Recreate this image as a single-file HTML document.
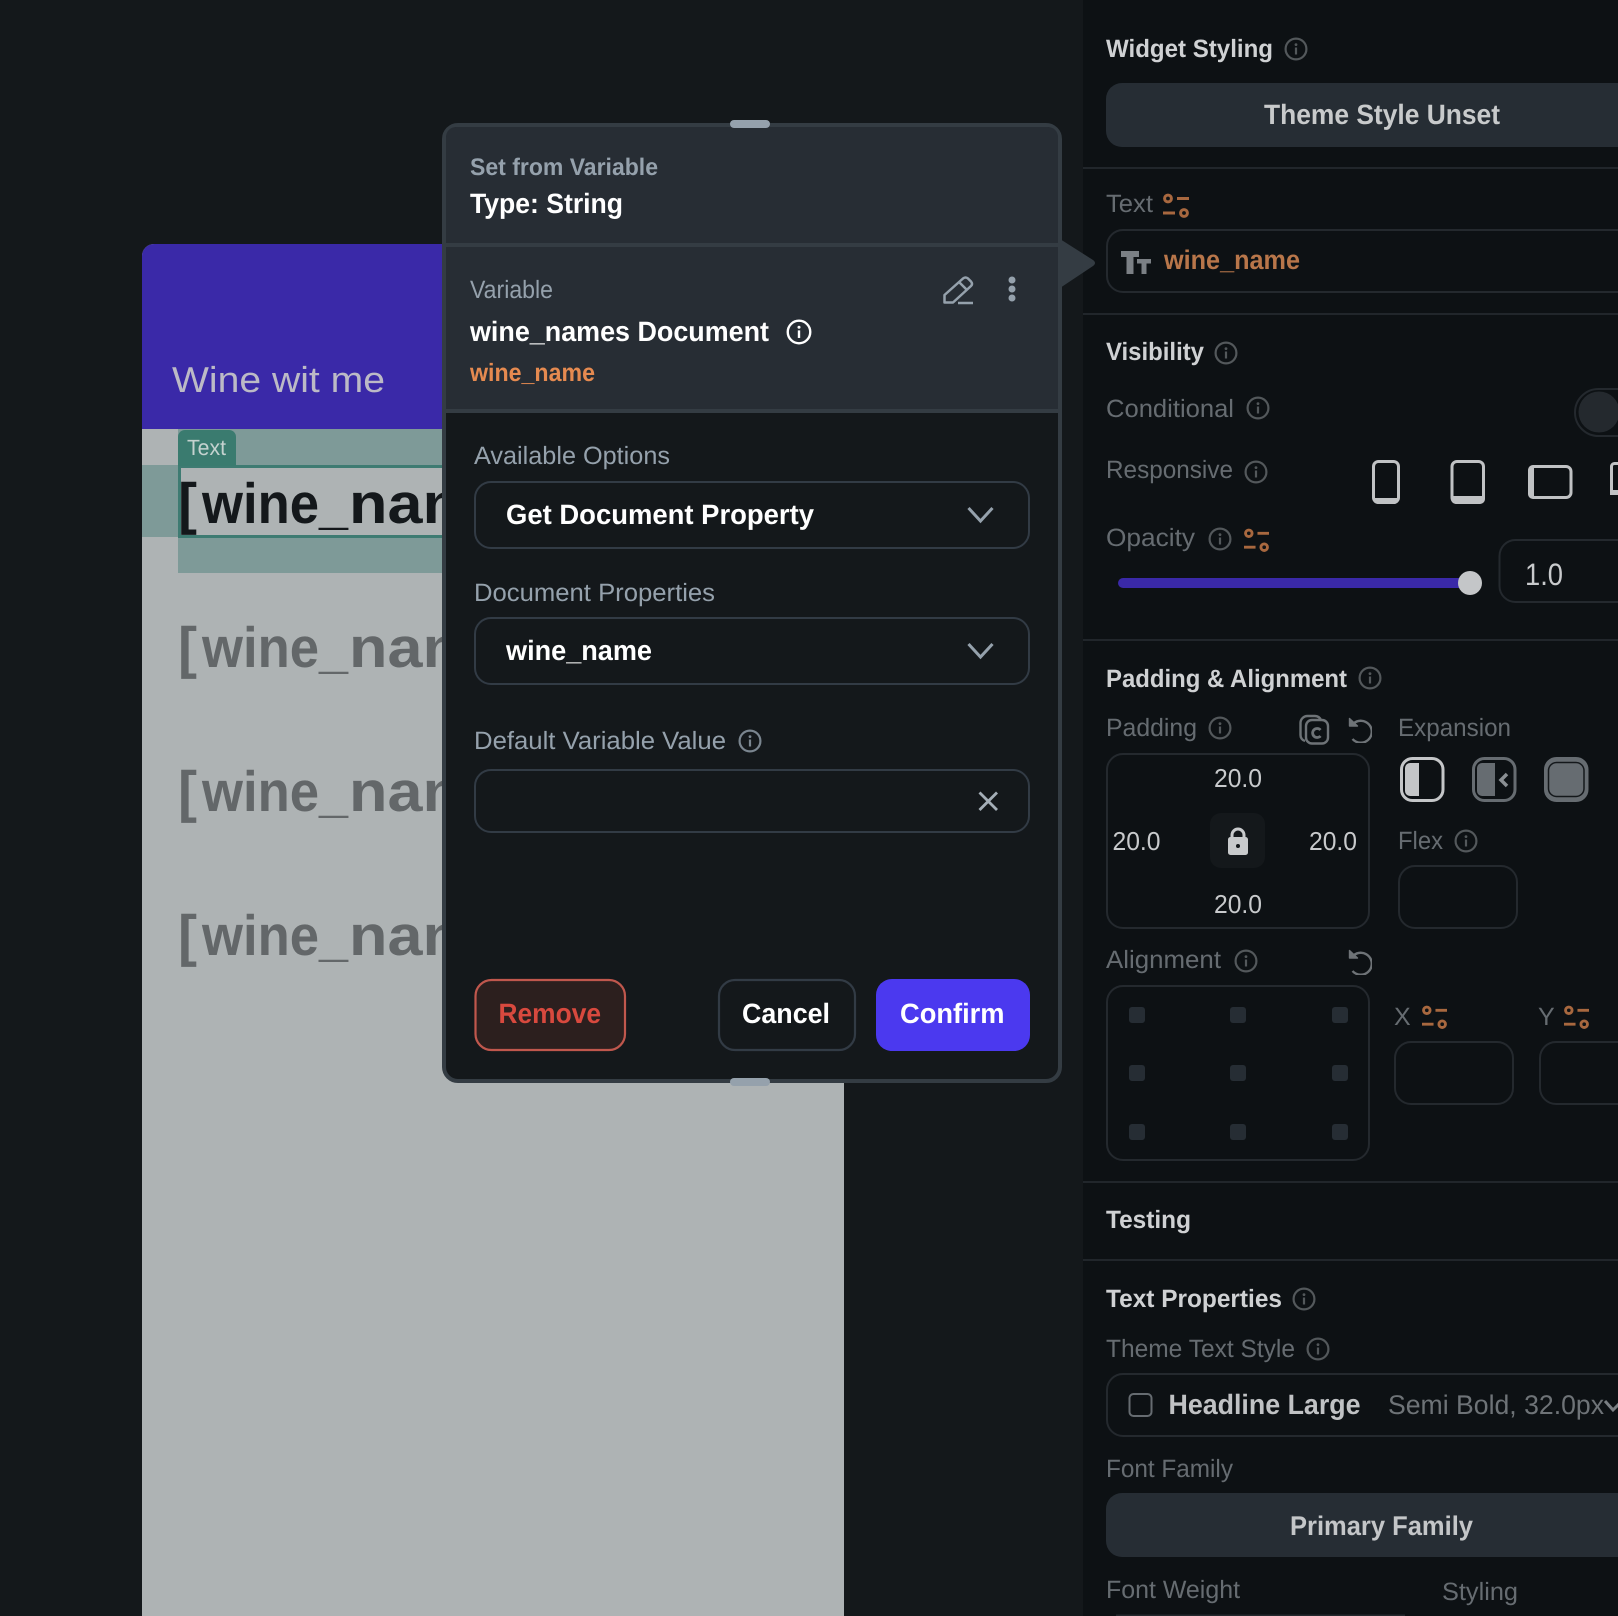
<!DOCTYPE html>
<html lang="en"><head><meta charset="utf-8"><title>Set from Variable</title>
<style>
html,body{margin:0;padding:0;background:#14181b;width:1618px;height:1616px;overflow:hidden}
svg{display:block;position:absolute;left:0;top:0}
text{font-family:"Liberation Sans",sans-serif;text-rendering:geometricPrecision;white-space:pre}
.l{font-size:25px;fill:#666c71}
.h{font-size:25px;font-weight:bold;fill:#cfd1d3}
.m{font-size:25px;fill:#95a1ac}
.b{font-size:28px;font-weight:bold;fill:#fff}
.n{font-size:26px;fill:#c8cacc}
.big{font-size:57px;font-weight:bold;fill:#636769}
.dk{fill:#14181b}
</style></head><body>
<svg width="1618" height="1616" viewBox="0 0 1618 1616" xmlns="http://www.w3.org/2000/svg">
<defs>
<symbol id="i" viewBox="0 0 24 24"><circle cx="12" cy="12" r="10.4" fill="none" stroke="currentColor" stroke-width="2.2"/><rect x="10.9" y="10.5" width="2.2" height="7" fill="currentColor"/><circle cx="12" cy="7.6" r="1.4" fill="currentColor"/></symbol>
<symbol id="v" viewBox="0 0 28 26"><g fill="none" stroke="#a8683f" stroke-width="3"><circle cx="6" cy="5.500" r="3.400"/><circle cx="22" cy="20" r="3.400"/><path d="M15 5.500H27M1 20H13"/></g></symbol>
<symbol id="u" viewBox="0 0 24 26"><path d="M5.500 6.500A11 11 0 1 1 4.500 22" fill="none" stroke="#6e7377" stroke-width="2.400"/><path d="M1.500 1.500V9H9.500Z" fill="#6e7377" stroke="#6e7377" stroke-width="1.400" stroke-linejoin="round"/></symbol>
</defs>

<!-- canvas + phone -->
<rect width="1618" height="1616" fill="#14181b"/>
<path d="M142 1616V256a12 12 0 0 1 12-12H844V1616Z" fill="#aeb3b4"/>
<path d="M142 429V256a12 12 0 0 1 12-12H844V429Z" fill="#3a29a8"/>
<text x="172" y="392" font-size="36" fill="#bcbac6" textLength="213" lengthAdjust="spacingAndGlyphs">Wine wit me</text>
<rect x="178" y="429" width="270" height="144" fill="#7e9a98"/>
<rect x="142" y="465" width="36" height="72" fill="#7e9a98"/>
<rect x="179.500" y="466.500" width="270" height="70" fill="#aeb3b4" stroke="#3e7b72" stroke-width="3"/>
<path d="M178 466V437a7 7 0 0 1 7-7H229a7 7 0 0 1 7 7V466Z" fill="#3a7b6f"/>
<text x="187" y="455" font-size="22" fill="#c4d2cf" textLength="39" lengthAdjust="spacingAndGlyphs">Text</text>

<text class="big dk" x="178" y="523">[</text>
<text class="big dk" x="202" y="523" textLength="117" lengthAdjust="spacingAndGlyphs">wine</text>
<text class="big dk" x="319" y="523" textLength="29" lengthAdjust="spacingAndGlyphs">_</text>
<text class="big dk" x="349" y="523" textLength="112" lengthAdjust="spacingAndGlyphs">nan</text>

<text class="big" x="178" y="667">[</text>
<text class="big" x="202" y="667" textLength="117" lengthAdjust="spacingAndGlyphs">wine</text>
<text class="big" x="319" y="667" textLength="29" lengthAdjust="spacingAndGlyphs">_</text>
<text class="big" x="349" y="667" textLength="112" lengthAdjust="spacingAndGlyphs">nan</text>

<text class="big" x="178" y="811">[</text>
<text class="big" x="202" y="811" textLength="117" lengthAdjust="spacingAndGlyphs">wine</text>
<text class="big" x="319" y="811" textLength="29" lengthAdjust="spacingAndGlyphs">_</text>
<text class="big" x="349" y="811" textLength="112" lengthAdjust="spacingAndGlyphs">nan</text>

<text class="big" x="178" y="955">[</text>
<text class="big" x="202" y="955" textLength="117" lengthAdjust="spacingAndGlyphs">wine</text>
<text class="big" x="319" y="955" textLength="29" lengthAdjust="spacingAndGlyphs">_</text>
<text class="big" x="349" y="955" textLength="112" lengthAdjust="spacingAndGlyphs">nan</text>

<!-- right panel -->
<rect x="1083" y="0" width="535" height="1616" fill="#0d1114"/>
<rect x="1081" y="0" width="2" height="1616" fill="#14181b"/>
<g fill="#21262b">
<rect x="1083" y="167" width="535" height="2"/><rect x="1083" y="313" width="535" height="2"/>
<rect x="1083" y="639" width="535" height="2"/><rect x="1083" y="1181" width="535" height="2"/>
<rect x="1083" y="1259" width="535" height="2"/>
</g>
<text class="h" x="1106" y="57" textLength="167" lengthAdjust="spacingAndGlyphs">Widget Styling</text>
<use href="#i" x="1284" y="37" width="24" height="24" color="#53585b"/>
<path d="M1122 83H1640V147H1122a16 16 0 0 1-16-16V99a16 16 0 0 1 16-16Z" fill="#262d34"/>
<text class="b" x="1264" y="124" style="fill:#c8cacb" textLength="236" lengthAdjust="spacingAndGlyphs">Theme Style Unset</text>
<text class="l" x="1106" y="212" textLength="47" lengthAdjust="spacingAndGlyphs">Text</text>
<use href="#v" x="1162" y="193" width="28" height="26"/>
<rect x="1107" y="230" width="540" height="62" rx="16" fill="none" stroke="#24292e" stroke-width="2"/>
<path d="M1121 251H1139V257H1133.500V274H1126.500V257H1121Z M1137 259H1151V263.500H1146.500V274H1141.500V263.500H1137Z" fill="#7b8085"/>
<text class="b" x="1164" y="269" style="fill:#b8764a;font-size:27px" textLength="136" lengthAdjust="spacingAndGlyphs">wine_name</text>
<text class="h" x="1106" y="360" textLength="98" lengthAdjust="spacingAndGlyphs">Visibility</text>
<use href="#i" x="1214" y="341" width="24" height="24" color="#53585b"/>
<text class="l" x="1106" y="417" textLength="128" lengthAdjust="spacingAndGlyphs">Conditional</text>
<use href="#i" x="1246" y="396" width="24" height="24" color="#53585b"/>
<rect x="1575" y="389" width="70" height="47" rx="23.500" fill="none" stroke="#24292e" stroke-width="2"/>
<circle cx="1599" cy="412" r="20.500" fill="#24292e"/>
<text class="l" x="1106" y="478" textLength="127" lengthAdjust="spacingAndGlyphs">Responsive</text>
<use href="#i" x="1244" y="460" width="24" height="24" color="#53585b"/>
<g fill="none" stroke="#c0c2c4" stroke-width="3">
<rect x="1373.500" y="461.500" width="25" height="41" rx="5"/>
<rect x="1452" y="461.500" width="31.500" height="41" rx="5"/>
<rect x="1529.500" y="466.500" width="41.500" height="31" rx="5"/>
<rect x="1611.500" y="463.500" width="30" height="30" rx="3"/>
</g>
<g fill="#c0c2c4">
<path d="M1373 498H1399V499a5 5 0 0 1-5 5H1378a5 5 0 0 1-5-5Z"/>
<path d="M1451 496H1485V499a5 5 0 0 1-5 5H1456a5 5 0 0 1-5-5Z"/>
<path d="M1534 465V499H1533a5 5 0 0 1-5-5V470a5 5 0 0 1 5-5Z"/>
<rect x="1610" y="490" width="8" height="5"/>
</g>
<text class="l" x="1106" y="546" textLength="89" lengthAdjust="spacingAndGlyphs">Opacity</text>
<use href="#i" x="1208" y="527" width="24" height="24" color="#53585b"/>
<use href="#v" x="1243" y="528" width="27" height="25"/>
<rect x="1118" y="578" width="352" height="10" rx="5" fill="#3a29a8"/>
<circle cx="1470" cy="583" r="12" fill="#c4c6c8"/>
<rect x="1499.500" y="540" width="140" height="62" rx="16" fill="none" stroke="#24292e" stroke-width="2"/>
<text x="1525" y="585" font-size="31" fill="#c8cacc" textLength="38" lengthAdjust="spacingAndGlyphs">1.0</text>
<text class="h" x="1106" y="687" textLength="241" lengthAdjust="spacingAndGlyphs">Padding &amp; Alignment</text>
<use href="#i" x="1358" y="666" width="24" height="24" color="#53585b"/>
<text class="l" x="1106" y="736" textLength="91" lengthAdjust="spacingAndGlyphs">Padding</text>
<use href="#i" x="1208" y="716" width="24" height="24" color="#53585b"/>
<g fill="none" stroke="#6e7377" stroke-width="2.400">
<path d="M1305 741a6 6 0 0 1-4.500-6V723a7 7 0 0 1 7-7H1315a7 7 0 0 1 6 4"/>
<rect x="1306" y="720" width="22" height="23.500" rx="6"/>
<path d="M1320.500 730a4.500 4.500 0 1 0 0 6" stroke-width="2.800"/>
</g>
<use href="#u" x="1348" y="717" width="24" height="26"/>
<text class="l" x="1398" y="736" textLength="113" lengthAdjust="spacingAndGlyphs">Expansion</text>
<rect x="1107" y="754" width="262" height="174" rx="16" fill="none" stroke="#24292e" stroke-width="2"/>
<text class="n" x="1214" y="787" textLength="48" lengthAdjust="spacingAndGlyphs">20.0</text>
<text class="n" x="1112.500" y="850" textLength="48" lengthAdjust="spacingAndGlyphs">20.0</text>
<text class="n" x="1309" y="850" textLength="48" lengthAdjust="spacingAndGlyphs">20.0</text>
<text class="n" x="1214" y="913" textLength="48" lengthAdjust="spacingAndGlyphs">20.0</text>
<rect x="1210" y="813" width="55" height="55" rx="11" fill="#14181b"/>
<path d="M1232 838V835a6 6 0 0 1 12 0V838" fill="none" stroke="#c8cacc" stroke-width="3"/>
<rect x="1228" y="837" width="20" height="18" rx="2.500" fill="#c8cacc"/>
<circle cx="1238" cy="846" r="2" fill="#14181b"/>
<!-- expansion icons -->
<rect x="1401.500" y="758.500" width="41.500" height="42" rx="11" fill="#0d1114" stroke="#c4c6c8" stroke-width="3"/>
<path d="M1410 763H1419V796H1410a5 5 0 0 1-5-5V768a5 5 0 0 1 5-5Z" fill="#c4c6c8"/>
<rect x="1473.500" y="758.500" width="41.500" height="42" rx="11" fill="#0d1114" stroke="#666c71" stroke-width="3"/>
<path d="M1482 763H1495V796H1482a5 5 0 0 1-5-5V768a5 5 0 0 1 5-5Z" fill="#666c71"/>
<path d="M1507 774L1501 780L1507 786" fill="none" stroke="#8a8f93" stroke-width="3.500"/>
<rect x="1545.500" y="758.500" width="41.500" height="42" rx="11" fill="#666c71" stroke="#666c71" stroke-width="3"/>
<rect x="1548.500" y="762.500" width="35.500" height="34" rx="8" fill="none" stroke="#14181b" stroke-width="1.500"/>
<text class="l" x="1398" y="849" textLength="45" lengthAdjust="spacingAndGlyphs">Flex</text>
<use href="#i" x="1454" y="829" width="24" height="24" color="#53585b"/>
<rect x="1399" y="866" width="118" height="62" rx="16" fill="none" stroke="#24292e" stroke-width="2"/>
<text class="l" x="1106" y="968" textLength="115" lengthAdjust="spacingAndGlyphs">Alignment</text>
<use href="#i" x="1234" y="949" width="24" height="24" color="#53585b"/>
<use href="#u" x="1348" y="949" width="24" height="26"/>
<rect x="1107" y="986" width="262" height="174" rx="16" fill="none" stroke="#24292e" stroke-width="2"/>
<g fill="#262d34">
<rect x="1129" y="1007" width="16" height="16" rx="3"/><rect x="1230" y="1007" width="16" height="16" rx="3"/><rect x="1332" y="1007" width="16" height="16" rx="3"/>
<rect x="1129" y="1065" width="16" height="16" rx="3"/><rect x="1230" y="1065" width="16" height="16" rx="3"/><rect x="1332" y="1065" width="16" height="16" rx="3"/>
<rect x="1129" y="1124" width="16" height="16" rx="3"/><rect x="1230" y="1124" width="16" height="16" rx="3"/><rect x="1332" y="1124" width="16" height="16" rx="3"/>
</g>
<text class="l" x="1394" y="1025">X</text>
<use href="#v" x="1421" y="1005" width="27" height="25"/>
<text class="l" x="1538" y="1025">Y</text>
<use href="#v" x="1563" y="1005" width="27" height="25"/>
<rect x="1395" y="1042" width="118" height="62" rx="16" fill="none" stroke="#24292e" stroke-width="2"/>
<rect x="1540" y="1042" width="118" height="62" rx="16" fill="none" stroke="#24292e" stroke-width="2"/>
<text class="h" x="1106" y="1228" textLength="85" lengthAdjust="spacingAndGlyphs">Testing</text>
<text class="h" x="1106" y="1307" textLength="176" lengthAdjust="spacingAndGlyphs">Text Properties</text>
<use href="#i" x="1292" y="1287" width="24" height="24" color="#53585b"/>
<text class="l" x="1106" y="1357" textLength="189" lengthAdjust="spacingAndGlyphs">Theme Text Style</text>
<use href="#i" x="1306" y="1337" width="24" height="24" color="#53585b"/>
<rect x="1107" y="1374" width="540" height="62" rx="16" fill="none" stroke="#24292e" stroke-width="2"/>
<rect x="1129.500" y="1394" width="22" height="22" rx="4" fill="none" stroke="#666c71" stroke-width="2"/>
<text class="b" x="1168.500" y="1414" style="fill:#c0c2c4" textLength="192" lengthAdjust="spacingAndGlyphs">Headline Large</text>
<text x="1388" y="1414" font-size="27" fill="#6e7377" textLength="216" lengthAdjust="spacingAndGlyphs">Semi Bold, 32.0px</text>
<path d="M1605 1401L1613 1410L1622 1401" fill="none" stroke="#7a7f83" stroke-width="3"/>
<text class="l" x="1106" y="1477" textLength="127" lengthAdjust="spacingAndGlyphs">Font Family</text>
<path d="M1122 1493H1640V1557H1122a16 16 0 0 1-16-16V1509a16 16 0 0 1 16-16Z" fill="#262d34"/>
<text class="b" x="1290" y="1535" style="fill:#c4c6c8;font-size:27px" textLength="183" lengthAdjust="spacingAndGlyphs">Primary Family</text>
<text class="l" x="1106" y="1598" textLength="134" lengthAdjust="spacingAndGlyphs">Font Weight</text>
<text class="l" x="1442" y="1600" textLength="76" lengthAdjust="spacingAndGlyphs">Styling</text>
<rect x="1116" y="1614.500" width="289" height="2" fill="#24292e"/>

<!-- modal arrow -->
<path d="M1060 239L1093 260Q1097 263 1093 266L1060 288Z" fill="#343c43"/>

<!-- modal -->
<rect x="444" y="125" width="616" height="956" rx="14" fill="#14181b" stroke="#343c43" stroke-width="4"/>
<path d="M446 411V137a10 10 0 0 1 10-10H1048a10 10 0 0 1 10 10V411Z" fill="#272d34"/>
<rect x="446" y="243" width="612" height="4" fill="#343c43"/>
<rect x="446" y="409" width="612" height="4" fill="#343c43"/>
<rect x="730" y="120" width="40" height="8" rx="4" fill="#95a1ac"/>
<rect x="730" y="1078" width="40" height="8" rx="4" fill="#95a1ac"/>
<text x="470" y="175" font-size="24" font-weight="bold" fill="#95a1ac" textLength="188" lengthAdjust="spacingAndGlyphs">Set from Variable</text>
<text class="b" x="470" y="213" textLength="153" lengthAdjust="spacingAndGlyphs">Type: String</text>
<text x="470" y="298" font-size="25" fill="#95a1ac" textLength="83" lengthAdjust="spacingAndGlyphs">Variable</text>
<text class="b" x="470" y="341" textLength="299" lengthAdjust="spacingAndGlyphs">wine_names Document</text>
<use href="#i" x="786" y="319" width="26" height="26" color="#fff"/>
<text x="470" y="381" font-size="25" font-weight="bold" fill="#e58a50" textLength="125" lengthAdjust="spacingAndGlyphs">wine_name</text>
<g fill="none" stroke="#95a1ac" stroke-width="2.500" stroke-linejoin="round">
<path d="M944.500 302.500V295L963 278.500Q965.500 276.500 968 278.500L971 281.500Q973 284 971 286L953 302.500Z"/>
<path d="M959 282L967.500 290.500M958 303H973"/>
</g>
<circle cx="1012" cy="280" r="3.500" fill="#95a1ac"/><circle cx="1012" cy="289" r="3.500" fill="#95a1ac"/><circle cx="1012" cy="298" r="3.500" fill="#95a1ac"/>
<text class="m" x="474" y="464" textLength="196" lengthAdjust="spacingAndGlyphs">Available Options</text>
<rect x="475" y="482" width="554" height="66" rx="16" fill="none" stroke="#323b45" stroke-width="2"/>
<text class="b" x="506" y="524" textLength="308" lengthAdjust="spacingAndGlyphs">Get Document Property</text>
<path d="M968.500 508L980.500 521L992.500 508" fill="none" stroke="#95a1ac" stroke-width="3"/>
<text class="m" x="474" y="601" textLength="241" lengthAdjust="spacingAndGlyphs">Document Properties</text>
<rect x="475" y="618" width="554" height="66" rx="16" fill="none" stroke="#323b45" stroke-width="2"/>
<text class="b" x="506" y="660" textLength="146" lengthAdjust="spacingAndGlyphs">wine_name</text>
<path d="M968.500 644L980.500 657L992.500 644" fill="none" stroke="#95a1ac" stroke-width="3"/>
<text class="m" x="474" y="749" textLength="252" lengthAdjust="spacingAndGlyphs">Default Variable Value</text>
<use href="#i" x="738" y="729" width="24" height="24" color="#7a858f"/>
<rect x="475" y="770" width="554" height="62" rx="16" fill="none" stroke="#323b45" stroke-width="2"/>
<path d="M979.500 792.500L997 810M997 792.500L979.500 810" fill="none" stroke="#a4aeb7" stroke-width="2.800"/>
<rect x="475.500" y="980" width="149.500" height="70" rx="16" fill="#2c1f1e" stroke="#c0574d" stroke-width="2.200"/>
<text class="b" x="498.500" y="1023" style="fill:#d8493e" textLength="102.500" lengthAdjust="spacingAndGlyphs">Remove</text>
<rect x="719" y="980" width="136" height="70" rx="16" fill="none" stroke="#323b45" stroke-width="2.200"/>
<text class="b" x="742" y="1023" textLength="88" lengthAdjust="spacingAndGlyphs">Cancel</text>
<rect x="876" y="979" width="154" height="72" rx="16" fill="#4b39ef"/>
<text class="b" x="900" y="1023" textLength="104.500" lengthAdjust="spacingAndGlyphs">Confirm</text>
</svg>
</body></html>
